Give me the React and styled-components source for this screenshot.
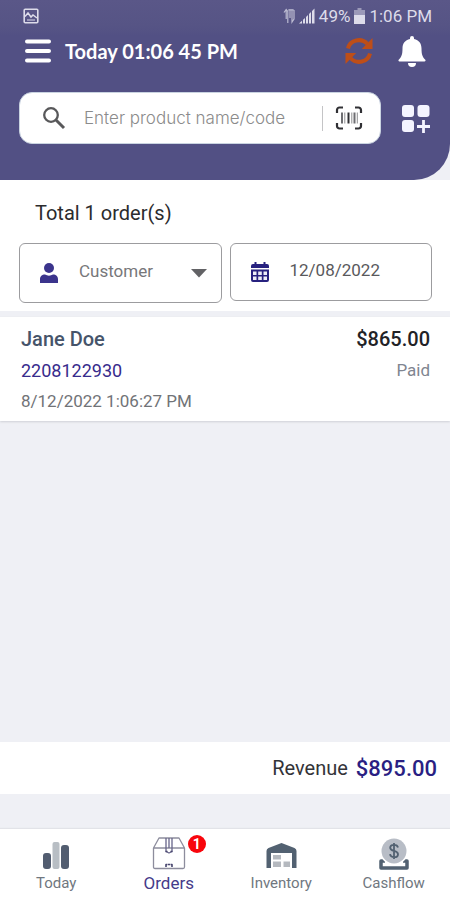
import React from "react";
import styled, { createGlobalStyle } from "styled-components";

const GlobalStyle = createGlobalStyle`
  *, *::before, *::after { box-sizing: border-box; }
  body { margin: 0; background: #eff0f5; font-family: Roboto, sans-serif; }
  button, input, select { font: inherit; }
`;

const Screen = styled.div`
  display: flex;
  flex-direction: column;
  min-height: 100vh;
`;

const Header = styled.header`
  background: linear-gradient(#5a5788 0, #565485 26px, #525084 36px);
  border-bottom-right-radius: 36px;
  padding-bottom: 36px;
  color: #fff;
`;

const StatusBar = styled.div`
  display: flex;
  align-items: center;
  gap: 4px;
  height: 32px;
  padding: 0 18px 0 23px;
  font-size: 17px;
  color: #dddcea;
`;

const Spacer = styled.span`
  flex: 1;
`;

const TitleRow = styled.div`
  display: flex;
  align-items: center;
  height: 38px;
  padding: 0 24px;
`;

const Title = styled.h1`
  flex: 1;
  margin: 0 0 0 13px;
  font-family: Lato, sans-serif;
  font-size: 20px;
  font-weight: 700;
  line-height: 24px;
`;

const IconButton = styled.button`
  display: flex;
  padding: 0;
  border: 0;
  background: none;
  color: ${(p) => p.$color || "#fff"};
  cursor: pointer;
`;

const HeaderActions = styled.div`
  display: flex;
  align-items: center;
  gap: 24px;
`;

const SearchRow = styled.div`
  display: flex;
  align-items: center;
  gap: 20px;
  padding: 22px 20px 0 19px;
`;

const SearchBox = styled.div`
  display: flex;
  align-items: center;
  flex: 1;
  min-width: 0;
  height: 52px;
  padding: 0 17px 0 22px;
  border: 1px solid #c9d3e0;
  border-radius: 13px;
  background: #fff;
`;

const SearchInput = styled.input`
  flex: 1;
  min-width: 0;
  margin-left: 18px;
  padding: 0;
  border: 0;
  outline: 0;
  background: none;
  color: #444;
  font-family: Inter, sans-serif;
  font-size: 17px;
  font-weight: 300;
  &::placeholder { color: #8b8b8b; opacity: 1; }
`;

const Divider = styled.span`
  width: 1px;
  height: 25px;
  margin-right: 12px;
  background: #c4c4c6;
`;

const Filters = styled.section`
  padding: 20px 18px 8px 19px;
  background: #fff;
`;

const Total = styled.h2`
  margin: 0 0 16px 16px;
  font-size: 20px;
  font-weight: 400;
  line-height: 27px;
  color: #2b2b2e;
`;

const FilterRow = styled.div`
  display: grid;
  grid-template-columns: 1fr 1fr;
  align-items: start;
  gap: 8px;
`;

const Field = styled.label`
  display: flex;
  align-items: center;
  height: ${(p) => p.$height};
  padding: 0 14px 0 19px;
  border: 1px solid #9c9c9f;
  border-radius: 6px;
`;

const fieldText = `
  flex: 1;
  min-width: 0;
  width: 0;
  margin-left: 20px;
  padding: 0 0 4px;
  border: 0;
  outline: 0;
  background: none;
  appearance: none;
  font-size: 17px;
  line-height: 24px;
`;

const FieldSelect = styled.select`
  ${fieldText}
  color: #77777a;
`;

const FieldInput = styled.input`
  ${fieldText}
  color: #59595c;
`;

const OrderList = styled.main`
  flex: 1;
  padding-top: 6px;
`;

const OrderCard = styled.article`
  display: grid;
  grid-template-columns: 1fr auto;
  padding: 7px 20px 4px 21px;
  background: #fff;
  box-shadow: 0 1px 2px #cfd1d6;
`;

const OrderText = styled.span`
  font-size: ${(p) => p.$size || "17px"};
  font-weight: ${(p) => p.$weight || 400};
  line-height: 31px;
  color: ${(p) => p.$color};
  text-align: ${(p) => p.$align || "left"};
`;

const Revenue = styled.section`
  display: flex;
  align-items: center;
  justify-content: flex-end;
  gap: 8px;
  height: 52px;
  margin-bottom: 35px;
  padding: 0 13px;
  background: #fff;
  font-size: 20px;
  color: #333338;
`;

const RevenueAmount = styled.strong`
  font-size: 22px;
  font-weight: 500;
  color: #2a1f83;
`;

const Nav = styled.nav`
  display: grid;
  grid-template-columns: repeat(4, 1fr);
  height: 71px;
  background: #fff;
  box-shadow: 0 -1px 1px #e2e3e8;
`;

const NavLink = styled.a`
  display: flex;
  flex-direction: column;
  align-items: center;
  justify-content: space-between;
  padding: 7px 0;
  font-size: ${(p) => (p.$active ? "17px" : "15px")};
  line-height: 20px;
  color: ${(p) => (p.$active ? "#453b8a" : "#707780")};
  text-decoration: none;
`;

const NavIcon = styled.span`
  position: relative;
  display: flex;
`;

const Badge = styled.span`
  position: absolute;
  top: -1px;
  left: 36px;
  width: 18px;
  height: 18px;
  border-radius: 50%;
  background: #f8050c;
  color: #fff;
  font-size: 14px;
  font-weight: 700;
  line-height: 18px;
  text-align: center;
`;

const PictureIcon = () => (
  <svg width="16" height="16" viewBox="0 0 16 16" fill="none" stroke="currentColor" aria-hidden="true">
    <rect x="1.2" y="1.2" width="13.6" height="13.6" rx="1" strokeWidth="1.6" />
    <path d="M2 8.5 5 5l3 4 2-2 4 3" strokeWidth="1.5" />
    <path d="M4 12h8" strokeWidth="1" />
  </svg>
);

const TransferIcon = () => (
  <svg width="12" height="16" viewBox="0 0 12 16" fill="none" stroke="currentColor" strokeWidth="1.2" opacity=".75" aria-hidden="true">
    <path d="M1 4.5 3.2 1.5l1.6 2V15M3.2 2v9M7 1v9M9 1v13l2-3V2M5 2h6" />
  </svg>
);

const SignalIcon = () => (
  <svg width="16" height="16" viewBox="0 0 16 16" fill="currentColor" aria-hidden="true">
    <path d="M0 15.5 3 12.8v2.7zM4 11.8l2-1.8v5.5H4zM7 9l2-1.9v8.4H7zM10 6l2-1.9v11.4h-2zM13 3l2.500-2.400v14.900H13z" />
  </svg>
);

const BatteryIcon = () => (
  <svg width="11" height="16" viewBox="0 0 11 16" fill="currentColor" aria-hidden="true">
    <path d="M3.5 0h4v2H11v5H0V2h3.5z" opacity=".5" />
    <path d="M0 7h11v9H0z" />
  </svg>
);

const MenuIcon = () => (
  <svg width="28" height="26" viewBox="0 0 28 26" stroke="currentColor" strokeWidth="4" strokeLinecap="round" aria-hidden="true">
    <path d="M3 3.5h22M3 13h22M3 22.5h22" />
  </svg>
);

const RefreshIcon = () => (
  <svg width="30" height="30" viewBox="0 0 30 30" aria-hidden="true">
    <path d="M4 12.5C6 3.5 17.5 1.5 23.5 8M26 17.5C24 26.5 12.5 28.5 6.5 22" fill="none" stroke="currentColor" strokeWidth="4" />
    <path d="M28.5 2v11H17.8zM1.5 28V17h10.7z" fill="currentColor" />
  </svg>
);

const BellIcon = () => (
  <svg width="28" height="31" viewBox="0 0 28 31" fill="currentColor" aria-hidden="true">
    <path d="M12 3V2a2 2 0 0 1 4 0v1c5 1 7.5 4.5 7.5 9.5 0 6 1 8.5 3.8 11.2.6.6.2 1.8-.8 1.8H1.5c-1 0-1.4-1.200-.8-1.800C3.500 21 4.500 18.500 4.500 12.500 4.500 7.500 7 4 12 3zM10 27h8a4 4 0 0 1-8 0z" />
  </svg>
);

const SearchIcon = () => (
  <svg width="24" height="24" viewBox="0 0 24 24" fill="none" stroke="#58585a" strokeWidth="2.3" aria-hidden="true">
    <circle cx="9" cy="9" r="6.8" />
    <path d="m14 14 8 8" strokeWidth="3" />
  </svg>
);

const BarcodeIcon = () => (
  <svg width="28" height="26" viewBox="0 0 28 26" fill="none" stroke="#303034" aria-hidden="true">
    <path d="M2 8V5a2.5 2.5 0 0 1 2.5-2.5H8M20 2.5h3.5A2.5 2.5 0 0 1 26 5v3M26 18v3a2.5 2.5 0 0 1-2.5 2.5H20M8 23.5H4.5A2.5 2.5 0 0 1 2 21v-3" strokeWidth="2.2" />
    <path d="M7 7.5v11M19.5 7.5v11" stroke="#6e6e72" strokeWidth="2" />
    <path d="M9.8 7.5v11M16.8 7.5v11M22.3 7.5v11" stroke="#8f8f92" strokeWidth="1" />
    <path d="M13.5 7.5v11" strokeWidth="2" />
  </svg>
);

const AppsIcon = () => (
  <svg width="29" height="29" viewBox="0 0 29 29" fill="#f4f4ff" aria-hidden="true">
    <rect x="1" y="1" width="12" height="12" rx="3" />
    <rect x="16.5" y="1" width="12" height="12" rx="3" />
    <rect x="1" y="16" width="12" height="12" rx="3" />
    <path d="M22.5 16v13M16 22.5h13" stroke="#f4f4ff" strokeWidth="2.8" />
  </svg>
);

const PersonIcon = () => (
  <svg width="20" height="22" viewBox="0 0 20 22" fill="#3b348c" aria-hidden="true">
    <circle cx="10" cy="6" r="5" />
    <path d="M1 21v-3.5C1 14 3 12.5 6 12.5c2.5 1.5 5.5 1.5 8 0 3 0 5 1.5 5 5V21z" />
  </svg>
);

const CaretIcon = () => (
  <svg width="16" height="10" viewBox="0 0 16 10" fill="#626265" aria-hidden="true">
    <path d="M0 1h16L8 9.500z" />
  </svg>
);

const CalendarIcon = () => (
  <svg width="20" height="22" viewBox="0 0 20 22" aria-hidden="true">
    <path d="M1 7V5q0-2 2-2h1.500V1h2v2h7V1h2v2H17q2 0 2 2v2zM1 8.500h18V19q0 2-2 2H3q-2 0-2-2z" fill="#27217f" />
    <path d="M3 10.500h3.500V14H3zM8.200 10.500h3.600V14H8.200zM13.500 10.500H17V14h-3.500zM3 15.500h3.500V19H3zM8.200 15.500h3.600V19H8.200zM13.500 15.500H17V19h-3.500z" fill="#eeeef8" />
  </svg>
);

const BarsIcon = () => (
  <svg width="28" height="34" viewBox="0 0 28 34" aria-hidden="true">
    <rect x="1" y="17" width="8" height="16" rx="3" fill="#525d70" />
    <rect x="10.5" y="6" width="7" height="27" rx="2" fill="#b8bec4" />
    <rect x="19" y="9" width="8" height="24" rx="3" fill="#525d70" />
  </svg>
);

const BoxIcon = () => (
  <svg width="34" height="34" viewBox="0 0 34 34" fill="none" stroke="#8d8d9d" strokeWidth="1.3" strokeLinejoin="round" aria-hidden="true">
    <path d="M1.5 12 7 2h20l5.5 10v19q0 1.500-1.500 1.500H3q-1.500 0-1.500-1.500zM1.500 12h31" />
    <path d="M14 2v13.500L17 17l3-1.500V2M17 2v10" stroke="#67658a" />
    <path d="M13.500 15.500h2M18.500 15.500h2M14 31v-2.500h1.500M20 31v-2.500h-1.500M16 28.500h2" stroke="#48466f" strokeWidth="1.600" />
  </svg>
);

const WarehouseIcon = () => (
  <svg width="31" height="34" viewBox="0 0 31 34" aria-hidden="true">
    <path d="M.5 32V15q0-2 2-3L15.500 7l13 5q2 1 2 3v17H26V17H5v15z" fill="#526171" />
    <path d="M7 19h8v4.500H7zM7 25.500h8V31H7zM17.500 25.500H24V31h-6.500z" fill="#b5b9bf" />
  </svg>
);

const CashIcon = () => (
  <svg width="30" height="34" viewBox="0 0 30 34" aria-hidden="true">
    <path d="M6 25H2v7h26v-7h-4" fill="none" stroke="#526171" strokeWidth="3.5" strokeLinejoin="round" />
    <circle cx="15" cy="15" r="14" fill="#fff" />
    <circle cx="15" cy="15" r="12.5" fill="#b8bdc6" />
    <path d="M19 11.500c-.8-3.800-7.800-3.500-7.800.2 0 4.300 7.800 2.200 7.800 6.500 0 4-7.300 4-8 0M15 7v16" fill="none" stroke="#526171" strokeWidth="1.8" />
  </svg>
);

const navItems = [
  { id: "today", label: "Today", Icon: BarsIcon },
  { id: "orders", label: "Orders", Icon: BoxIcon, badge: 1, active: true },
  { id: "inventory", label: "Inventory", Icon: WarehouseIcon },
  { id: "cashflow", label: "Cashflow", Icon: CashIcon },
];

export default function App() {
  return (
    <Screen>
      <GlobalStyle />
      <Header>
        <StatusBar>
          <PictureIcon />
          <Spacer />
          <TransferIcon />
          <SignalIcon />
          <span>49%</span>
          <BatteryIcon />
          <span>1:06 PM</span>
        </StatusBar>
        <TitleRow>
          <IconButton type="button" aria-label="Menu"><MenuIcon /></IconButton>
          <Title>Today 01:06 45 PM</Title>
          <HeaderActions>
            <IconButton type="button" aria-label="Refresh" $color="#be4e18"><RefreshIcon /></IconButton>
            <IconButton type="button" aria-label="Notifications"><BellIcon /></IconButton>
          </HeaderActions>
        </TitleRow>
        <SearchRow>
          <SearchBox>
            <SearchIcon />
            <SearchInput type="text" aria-label="Enter product name/code" placeholder="Enter product name/code" />
            <Divider />
            <IconButton type="button" aria-label="Scan barcode"><BarcodeIcon /></IconButton>
          </SearchBox>
          <IconButton type="button" aria-label="Add module"><AppsIcon /></IconButton>
        </SearchRow>
      </Header>

      <Filters>
        <Total>Total 1 order(s)</Total>
        <FilterRow>
          <Field $height="60px">
            <PersonIcon />
            <FieldSelect aria-label="Customer" defaultValue="customer">
              <option value="customer">Customer</option>
            </FieldSelect>
            <CaretIcon />
          </Field>
          <Field $height="58px">
            <CalendarIcon />
            <FieldInput type="text" aria-label="Date" defaultValue="12/08/2022" />
          </Field>
        </FilterRow>
      </Filters>

      <OrderList>
        <OrderCard>
          <OrderText $size="20px" $weight={500} $color="#46546a">Jane Doe</OrderText>
          <OrderText $size="20px" $weight={500} $color="#222226" $align="right">$865.00</OrderText>
          <OrderText $size="18px" $color="#382b8c">2208122930</OrderText>
          <OrderText $color="#808590" $align="right">Paid</OrderText>
          <OrderText $color="#717377">8/12/2022 1:06:27 PM</OrderText>
        </OrderCard>
      </OrderList>

      <Revenue>
        <span>Revenue</span>
        <RevenueAmount>$895.00</RevenueAmount>
      </Revenue>

      <Nav>
        {navItems.map(({ id, label, Icon, badge, active }) => (
          <NavLink key={id} href={`#${id}`} $active={active}>
            <NavIcon>
              <Icon />
              {badge && <Badge>{badge}</Badge>}
            </NavIcon>
            {label}
          </NavLink>
        ))}
      </Nav>
    </Screen>
  );
}
